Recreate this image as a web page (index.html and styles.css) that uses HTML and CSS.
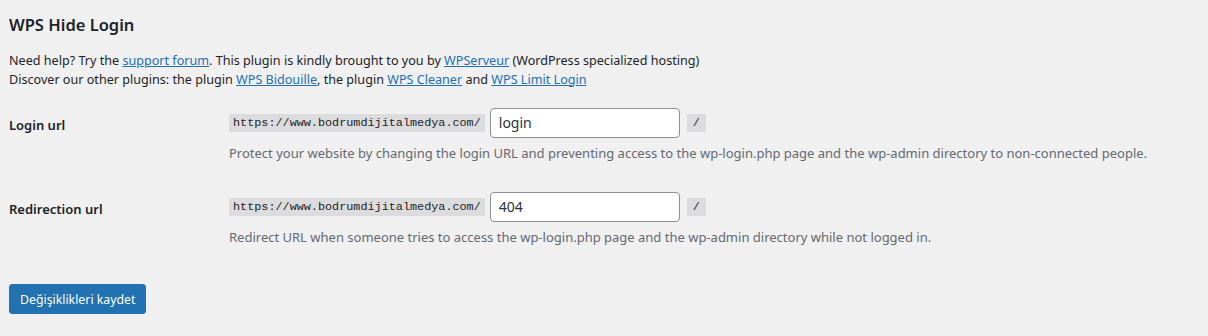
FILE: index.html
```html
<!DOCTYPE html>
<html lang="tr">
<head>
    <meta charset="UTF-8">
    <meta name="viewport" content="width=device-width, initial-scale=1.0">
    <title>WPS Hide Login</title>
    <link rel="stylesheet" href="styles.css">
</head>
<body>

    <div class="wrap">
        <h2>WPS Hide Login</h2>

        <p class="intro">
            Need help? Try the <a href="#">support forum</a>. This plugin is kindly brought to you by <a href="#">WPServeur</a> (WordPress specialized hosting)<br>
            Discover our other plugins: the plugin <a href="#">WPS Bidouille</a>, the plugin <a href="#">WPS Cleaner</a> and <a href="#">WPS Limit Login</a>
        </p>

        <table class="form-table">
            <tr>
                <th>Login url</th>
                <td>
                    <div class="url-field">
                        <code>https://www.bodrumdijitalmedya.com/</code>
                        <input type="text" value="login">
                        <code class="slash">/</code>
                    </div>
                    <p class="description">Protect your website by changing the login URL and preventing access to the wp-login.php page and the wp-admin directory to non-connected people.</p>
                </td>
            </tr>
            <tr>
                <th>Redirection url</th>
                <td>
                    <div class="url-field">
                        <code>https://www.bodrumdijitalmedya.com/</code>
                        <input type="text" value="404">
                        <code class="slash">/</code>
                    </div>
                    <p class="description">Redirect URL when someone tries to access the wp-login.php page and the wp-admin directory while not logged in.</p>
                </td>
            </tr>
        </table>

        <p class="submit">
            <button type="submit" class="button-primary">Değişiklikleri kaydet</button>
        </p>
    </div>

</body>
</html>
```

FILE: styles.css
```css
/* Reset */
* {
    margin: 0;
    padding: 0;
    box-sizing: border-box;
}

body {
    font-family: 'Noto Sans', 'Open Sans', sans-serif;
    font-size: 13px;
    line-height: 1.4;
    background-color: #f0f0f1;
    color: #1d2327;
}

.wrap {
    padding: 15px 9px 0 9px;
}

h2 {
    font-size: 16.5px;
    font-weight: 600;
    line-height: 1.2;
    margin-bottom: 16px;
}

a {
    color: #2271b1;
    text-decoration: underline;
}

.intro {
    font-size: 12.6px;
    line-height: 19px;
}

.form-table {
    border-collapse: collapse;
    margin-top: 4px;
}

.form-table th {
    width: 210px;
    text-align: left;
    vertical-align: top;
    font-weight: 600;
    padding: 24px 10px 20px 0;
    line-height: 1.3;
}

.form-table td {
    padding: 15px 10px;
    vertical-align: top;
}

.url-field {
    display: flex;
    align-items: center;
}

code {
    font-family: 'Liberation Mono', 'DejaVu Sans Mono', monospace;
    font-size: 11.8px;
    background-color: #dcdcde;
    padding: 1px 4px;
    line-height: 16px;
}

code.slash {
    padding: 1px 6px;
    margin-left: 7px;
}

input[type="text"] {
    width: 190px;
    height: 30px;
    margin-left: 5px;
    padding: 0 8px;
    font-family: inherit;
    font-size: 14px;
    color: #2c3338;
    border: 1px solid #8c8f94;
    border-radius: 4px;
    background-color: #fff;
}

.description {
    color: #646970;
    margin-top: 6px;
}

.submit {
    padding: 10px 0;
    margin-top: 13px;
}

.button-primary {
    background-color: #2271b1;
    color: #fff;
    border: 1px solid #2271b1;
    border-radius: 3px;
    font-family: inherit;
    font-size: 12.3px;
    padding: 0 10px;
    height: 30px;
    cursor: pointer;
}
```
